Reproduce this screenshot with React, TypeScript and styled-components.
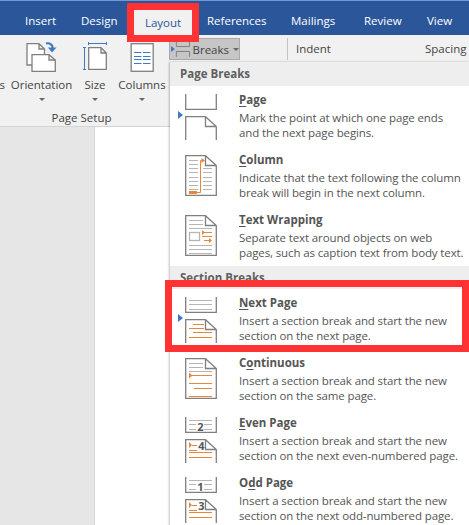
import React from "react";
import styled, { createGlobalStyle } from "styled-components";

const Global = createGlobalStyle`
  html, body { margin: 0; padding: 0; background: #fff; }
  * { box-sizing: border-box; }
`;
const FONT = `"Open Sans", "Noto Sans", "Liberation Sans", sans-serif`;

const Page = styled.div`
  position: relative; width: 469px; height: 525px; overflow: hidden;
  display: flex; flex-direction: column; font-family: ${FONT}; font-size: 11.5px; color: #444;
`;
const TabBar = styled.div`
  height: 35px; flex: none; background: #2b579a; border-top: 1px solid #6f9ad8;
  display: flex; align-items: flex-end; padding-left: 25px;
`;
const Tab = styled.div<{ $active?: boolean; $w: number; $pad?: number }>`
  width: ${p => p.$w}px; height: ${p => (p.$active ? 25 : 34)}px; flex: none;
  display: flex; align-items: center; white-space: nowrap;
  justify-content: ${p => (p.$active ? "center" : "flex-start")};
  color: ${p => (p.$active ? "#2b579a" : "#fff")};
  background: ${p => (p.$active ? "#f1f1f1" : "transparent")};
  font-size: 11.5px; padding-top: ${p => (p.$active ? 0 : 5)}px; padding-left: ${p => p.$pad ?? 0}px;
`;
const Ribbon = styled.div`
  height: 92px; flex: none; background: #f1f1f1; border-bottom: 1px solid #d4d4d4; display: flex;
`;
const Group = styled.div`
  width: 203px; flex: none; margin-left: -40px; display: flex; flex-direction: column;
  height: 91px;
`;
const Tools = styled.div`
  display: flex; height: 74px; padding-top: 7px;
`;
const Tool = styled.div<{ $w: number }>`
  width: ${p => p.$w}px; flex: none; display: flex; flex-direction: column; align-items: center;
  color: #444; font-size: 11.5px; white-space: nowrap;
`;
const ToolIcon = styled.svg`
  display: block; height: 33px; width: 36px; flex: none;
`;
const ToolLabel = styled.div`
  line-height: 16px; margin-top: 2px;
`;
const Caret = styled.div`
  width: 0; height: 0; border-left: 3px solid transparent; border-right: 3px solid transparent;
  border-top: 3px solid #666; margin-top: 5px;
`;
const GroupName = styled.div`
  text-align: center; line-height: 16px; margin-top: 2px; padding-left: 40px; color: #444; font-size: 11.5px;
`;
const RightSide = styled.div`
  flex: 1; margin-left: 6px; display: flex; align-items: flex-start; padding-top: 3px;
`;
const BreaksButton = styled.div`
  width: 71px; height: 22px; flex: none; background: #c6c6c6; border: 1px solid #a9a9a9;
  display: flex; align-items: center; gap: 2px; padding-left: 1px; font-size: 11.5px; color: #444;
`;
const SmallCaret = styled(Caret)`
  margin: 1px 0 0 2px;
`;
const Divider = styled.div`
  width: 1px; height: 22px; background: #c4c4c4; margin-left: 47px; flex: none;
`;
const ParaLabel = styled.div<{ $w: number }>`
  width: ${p => p.$w}px; flex: none; padding-left: 8px; line-height: 22px; font-size: 11.5px; color: #444; white-space: nowrap;
`;
const Workspace = styled.div`
  flex: 1; display: flex; background: #fff;
`;
const Gutter = styled.div`
  width: 95px; flex: none; background: #e6e6e6; border-right: 1px solid #d4d4d4;
`;
const Menu = styled.div`
  position: absolute; left: 170px; top: 62px; width: 299px; background: #fff;
  box-shadow: -1px 0 2px rgba(0,0,0,.25); display: flex; flex-direction: column;
`;
const MenuHeader = styled.div<{ $h: number }>`
  height: ${p => p.$h}px; background: #eeeeee; padding-left: 10px; font-weight: 700;
  font-size: 11.5px; color: #5f5f5f; line-height: 23px;
`;
const Item = styled.div`
  height: 60px; flex: none; display: flex; position: relative; padding: 8px 0 0 15px;
`;
const Marker = styled.div`
  position: absolute; left: 8px; top: 25px; width: 0; height: 0;
  border-left: 5px solid #3e79c2; border-top: 4px solid transparent; border-bottom: 4px solid transparent;
`;
const ItemIcon = styled.svg`
  width: 32px; height: 46px; flex: none; display: block;
`;
const ItemText = styled.div`
  margin-left: 22px; margin-top: -1px; display: flex; flex-direction: column;
`;
const ItemTitle = styled.div`
  font-weight: 700; font-size: 11.5px; line-height: 15px; color: #555; margin-top: -1px; margin-bottom: 3px;
  u { text-underline-offset: 2px; }
`;
const ItemDesc = styled.div`
  font-size: 11.5px; line-height: 15px; color: #555; white-space: nowrap; letter-spacing: -0.12px;
`;
const Highlight = styled.div<{ $l: number; $t: number; $w: number; $h: number }>`
  position: absolute; left: ${p => p.$l}px; top: ${p => p.$t}px; width: ${p => p.$w}px; height: ${p => p.$h}px;
  border: 7px solid #ff3333; pointer-events: none;
`;

const G = "#7f7f7f", L = "#b5b5b5", O = "#e8863a", SW = 1.3;

const hl = (x1: number, x2: number, y: number, c = L) => <line x1={x1} x2={x2} y1={y + 0.5} y2={y + 0.5} stroke={c} />;
const Sheet = () => (
  <path d="M.7 .7H20.5L31.3 10.5V40.3H.7Z M20.5 .7V10.5H31.3" fill="#fff" stroke={G} strokeWidth={SW} />
);
const OpenTop = () => <path d="M.7 0V15.3H31.3V0" fill="none" stroke={G} strokeWidth={SW} />;
const OpenSheet = () => (
  <path d="M.7 46V22.7H20.5L31.3 32.5V46 M20.5 22.7V32.5H31.3" fill="#fff" stroke={G} strokeWidth={SW} />
);
const Num = ({ x, y, t }: { x: number; y: number; t: string }) => (
  <text x={x} y={y} fontFamily={FONT} fontSize="11" fontWeight="700" fill="#555" textAnchor="middle">{t}</text>
);

const PageIcon = () => (
  <ItemIcon viewBox="0 0 32 46"><OpenTop /><OpenSheet /></ItemIcon>
);
const ColumnIcon = () => (
  <ItemIcon viewBox="0 0 32 46">
    <g transform="translate(0 1)">
      <Sheet />
      {[5, 9, 13, 17, 22, 26, 30, 34].map(y => <React.Fragment key={y}>{hl(4, 13, y)}{y > 9 ? hl(18, 27, y) : null}</React.Fragment>)}
      <path d="M15.5 37.5V5.5H17" fill="none" stroke={O} />
      <path d="M16.5 3L20 5.5L16.5 8Z" fill={O} />
      <rect x="4" y="36" width="8" height="3" fill={O} />
      <path d="M12 37.5H15.5" stroke={O} />
    </g>
  </ItemIcon>
);
const WrapIcon = () => (
  <ItemIcon viewBox="0 0 32 46">
    <g transform="translate(0 1)">
      <Sheet />
      {hl(4, 18, 5)}{hl(4, 18, 9)}{hl(4, 27, 13)}
      <rect x="4.5" y="17.5" width="10" height="8" fill="#fff" stroke={L} strokeWidth={SW} />
      {hl(4, 27, 30)}{hl(4, 27, 34)}{hl(4, 27, 38)}
      <path d="M19 17.5H27M17 21.5H27M19 25.5H25" stroke={O} />
      <path d="M17 15L20 17.5L17 20Z M24 23L27 25.5L24 28Z" fill={O} />
    </g>
  </ItemIcon>
);
const NextIcon = () => (
  <ItemIcon viewBox="0 0 32 46">
    <OpenTop />{hl(4, 27, 3)}{hl(4, 27, 7)}{hl(4, 27, 12)}
    <OpenSheet />
    {hl(8, 19, 27, O)}{hl(4, 19, 31, O)}{hl(8, 27, 35, O)}{hl(4, 27, 40, O)}
  </ItemIcon>
);
const ContinuousIcon = () => (
  <ItemIcon viewBox="0 0 32 46">
    <g transform="translate(0 1)">
      <Sheet />
      {hl(4, 18, 5)}{hl(4, 18, 9)}{hl(4, 27, 13)}
      <path d="M4 14.5L7.5 17.5L4 20.5Z" fill={O} />
      {hl(7, 27, 17, O)}{hl(4, 27, 25, O)}{hl(9, 27, 30, O)}{hl(4, 27, 38, O)}
    </g>
  </ItemIcon>
);
const NumberedIcon = ({ top, bottom }: { top: string; bottom: string }) => (
  <ItemIcon viewBox="0 0 32 46">
    <OpenTop />
    {hl(4, 27, 3)}{hl(4, 11, 7)}{hl(19, 27, 7)}{hl(4, 11, 12)}{hl(19, 27, 12)}
    <Num x={15.5} y={14} t={top} />
    <OpenSheet />
    <path d="M4 25L7 28L4 31Z" fill={O} />
    {hl(7, 12, 28, O)}{hl(4, 12, 33, O)}{hl(4, 27, 35, O)}{hl(4, 27, 40, O)}
    <Num x={16.5} y={33} t={bottom} />
  </ItemIcon>
);

const U = styled.u``;

const items1 = [
  { icon: <PageIcon />, mark: true, t: <><U>P</U>age</>, d: ["Mark the point at which one page ends", "and the next page begins."] },
  { icon: <ColumnIcon />, t: <><U>C</U>olumn</>, d: ["Indicate that the text following the column", "break will begin in the next column."] },
  { icon: <WrapIcon />, t: <><U>T</U>ext Wrapping</>, d: ["Separate text around objects on web", "pages, such as caption text from body text."] },
];
const items2 = [
  { icon: <NextIcon />, mark: true, t: <><U>N</U>ext Page</>, d: ["Insert a section break and start the new", "section on the next page."] },
  { icon: <ContinuousIcon />, t: <>C<U>o</U>ntinuous</>, d: ["Insert a section break and start the new", "section on the same page."] },
  { icon: <NumberedIcon top="2" bottom="4" />, t: <><U>E</U>ven Page</>, d: ["Insert a section break and start the new", "section on the next even-numbered page."] },
  { icon: <NumberedIcon top="1" bottom="3" />, t: <>O<U>d</U>d Page</>, d: ["Insert a section break and start the new", "section on the next odd-numbered page."] },
];

type It = { icon: React.ReactNode; mark?: boolean; t: React.ReactNode; d: string[] };
const MenuItem = ({ it }: { it: It }) => (
  <Item>
    {it.mark ? <Marker /> : null}
    {it.icon}
    <ItemText>
      <ItemTitle>{it.t}</ItemTitle>
      {it.d.map(x => <ItemDesc key={x}>{x}</ItemDesc>)}
    </ItemText>
  </Item>
);

const B = "#3e79c2";

export default function App() {
  return (
    <Page>
      <Global />
      <TabBar>
        <Tab $w={56}>Insert</Tab>
        <Tab $w={53}>Design</Tab>
        <Tab $w={58} $active>Layout</Tab>
        <Tab $w={99} $pad={15}>References</Tab>
        <Tab $w={73}>Mailings</Tab>
        <Tab $w={63}>Review</Tab>
        <Tab $w={30}>View</Tab>
      </TabBar>
      <Ribbon>
        <Group>
          <Tools>
            <Tool $w={47}><ToolIcon as="div" /><ToolLabel>Margins</ToolLabel><Caret /></Tool>
            <Tool $w={69}>
              <ToolIcon viewBox="0 0 36 33">
                <path d="M3 1.7H15L20.5 7V23H3Z M15 1.7V7H20.5" fill="#fff" stroke={G} strokeWidth={SW} />
                <path d="M8 12.7H25L31.3 18V29.3H8Z M25 12.7V18H31.3" fill="#fff" stroke={G} strokeWidth={SW} />
                <path d="M22 1.5C26 .5 29 3 28.5 6.5" fill="none" stroke={B} strokeWidth="2.2" />
                <path d="M24 5.5H32.5L28 10.5Z" fill={B} />
              </ToolIcon>
              <ToolLabel>Orientation</ToolLabel><Caret />
            </Tool>
            <Tool $w={38}>
              <ToolIcon viewBox="0 0 36 33">
                <path d="M11.7 5.7H24L29.3 11V27.3H11.7Z M24 5.7V11H29.3" fill="#fff" stroke={G} strokeWidth={SW} />
                <path d="M11.5 1.5H29.5M11.5 0V3M29.5 0V3M7.5 5V28M6 5.5H9M6 27.5H9" stroke={B} fill="none" />
              </ToolIcon>
              <ToolLabel>Size</ToolLabel><Caret />
            </Tool>
            <Tool $w={56}>
              <ToolIcon viewBox="0 0 36 33">
                <rect x="7.2" y="1.7" width="22" height="27.6" fill="#fff" stroke={G} strokeWidth={SW} />
                <path d="M10 10.5H17.5M19 10.5H26.5M10 14.5H17.5M19 14.5H26.5M10 17.5H17.5M19 17.5H26.5M10 21.5H17.5M19 21.5H26.5" stroke={B} />
              </ToolIcon>
              <ToolLabel>Columns</ToolLabel><Caret />
            </Tool>
          </Tools>
          <GroupName>Page Setup</GroupName>
        </Group>
        <RightSide>
          <BreaksButton>
            <svg width="20" height="18" viewBox="0 0 20 18">
              <path d="M5.5 1V6.5H19V1M5.5 17V11.5H19V17" fill="none" stroke={G} />
              <path d="M0 6L4 9L0 12Z" fill={B} />
            </svg>
            Breaks<SmallCaret />
          </BreaksButton>
          <Divider />
          <ParaLabel $w={129}>Indent</ParaLabel>
          <ParaLabel $w={52}>Spacing</ParaLabel>
        </RightSide>
      </Ribbon>
      <Workspace><Gutter /></Workspace>
      <Menu>
        <MenuHeader $h={24}>Page Breaks</MenuHeader>
        {items1.map((it, i) => <MenuItem key={i} it={it} />)}
        <MenuHeader $h={23}>Section Breaks</MenuHeader>
        {items2.map((it, i) => <MenuItem key={i} it={it} />)}
      </Menu>
      <Highlight $l={127} $t={3} $w={72} $h={39} />
      <Highlight $l={165} $t={280} $w={304} $h={72} />
    </Page>
  );
}
